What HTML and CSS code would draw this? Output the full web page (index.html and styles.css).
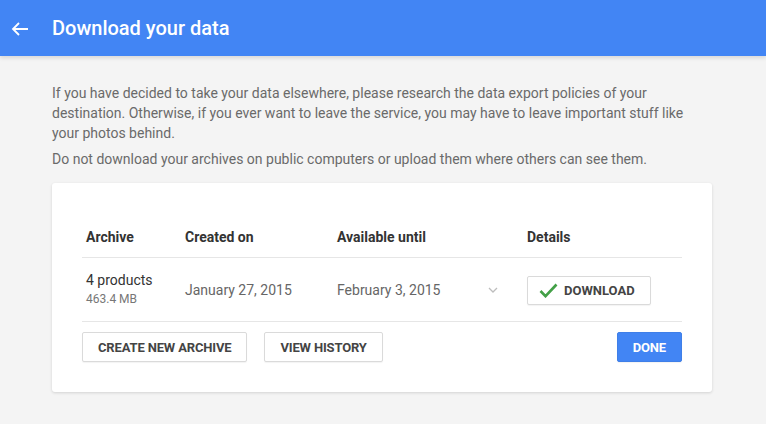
FILE: index.html
```html
<!DOCTYPE html>
<html>
<head>
<meta charset="utf-8">
<link rel="stylesheet" href="styles.css">
</head>
<body>
<header class="topbar">
  <svg class="back" width="18" height="16" viewBox="0 0 18 16"><path d="M17 8H2M8 2L2 8l6 6" fill="none" stroke="#fff" stroke-width="1.8"/></svg>
  <h1 class="title">Download your data</h1>
</header>
<main class="content">
  <p class="intro">If you have decided to take your data elsewhere, please research the data export policies of your destination. Otherwise, if you ever want to leave the service, you may have to leave important stuff like your photos behind.</p>
  <p class="intro">Do not download your archives on public computers or upload them where others can see them.</p>
  <section class="card">
    <div class="table">
      <div class="row head">
        <div class="cell">Archive</div>
        <div class="cell">Created on</div>
        <div class="cell">Available until</div>
        <div class="cell"></div>
        <div class="cell details">Details</div>
      </div>
      <div class="row data">
        <div class="cell">
          <div class="prod">4 products</div>
          <div class="size">463.4 MB</div>
        </div>
        <div class="cell date">January 27, 2015</div>
        <div class="cell date">February 3, 2015</div>
        <div class="cell chev"><svg width="10" height="6" viewBox="0 0 10 6"><path d="M1 1l4 4 4-4" fill="none" stroke="#bdbdbd" stroke-width="1.3"/></svg></div>
        <div class="cell details">
          <button class="btn dl"><svg width="19" height="15" viewBox="0 0 19 15"><path d="M1.5 8l5 5.2L17.5 1.5" fill="none" stroke="#43a047" stroke-width="2.6"/></svg>DOWNLOAD</button>
        </div>
      </div>
    </div>
    <div class="actions">
      <button class="btn">CREATE NEW ARCHIVE</button>
      <button class="btn">VIEW HISTORY</button>
      <button class="btn primary">DONE</button>
    </div>
  </section>
</main>
</body>
</html>
```
FILE: styles.css
```css
html, body {
  margin: 0;
  padding: 0;
}
body {
  background: #f4f4f4;
  font-family: Roboto, "Liberation Sans", Arial, sans-serif;
  width: 766px;
  height: 424px;
  overflow: hidden;
}
.topbar {
  height: 56px;
  background: #4285f4;
  display: flex;
  align-items: center;
  box-shadow: 0 2px 4px rgba(0,0,0,0.12);
}
.back {
  margin-left: 11px;
  margin-top: 1px;
}
.title {
  margin: 0 0 0 23px;
  color: #fff;
  font-size: 20px;
  font-weight: 500;
}
.content {
  margin-left: 52px;
  width: 660px;
  padding-top: 27px;
}
.intro {
  margin: 0 0 6px 0;
  font-size: 14px;
  line-height: 20px;
  color: #6a6a6a;
}
.card {
  margin-top: 14px;
  background: #fff;
  border-radius: 3px;
  box-shadow: 0 1px 3px rgba(0,0,0,0.14);
  padding: 34px 30px 30px 30px;
}
.row {
  display: grid;
  grid-template-columns: 99px 152px 150px 40px 1fr;
  align-items: center;
  border-bottom: 1px solid #e6e6e6;
}
.row.head {
  height: 40px;
  font-weight: 700;
  font-size: 14px;
  color: #333;
}
.row.data {
  height: 63px;
}
.cell {
  padding-left: 4px;
}
.prod {
  font-size: 14px;
  color: #333;
  line-height: 19px;
}
.size {
  font-size: 12px;
  color: #777;
  line-height: 19px;
}
.date {
  font-size: 14px;
  color: #666;
}
.chev {
  display: flex;
  align-items: center;
  padding-left: 5px;
}
.btn {
  font-family: Roboto, "Liberation Sans", Arial, sans-serif;
  font-size: 13px;
  font-weight: 700;
  letter-spacing: -0.15px;
  color: #444;
  background: #fff;
  border: 1px solid #dadada;
  border-radius: 2px;
  height: 30px;
  padding: 0 15px;
  box-shadow: 0 1px 1px rgba(0,0,0,0.05);
  display: inline-flex;
  align-items: center;
}
.dl {
  height: 29px;
  padding: 0 15px 0 11px;
  margin-top: 1px;
  letter-spacing: 0;
}
.dl svg {
  margin-right: 6px;
}
.actions {
  display: flex;
  gap: 17px;
  margin-top: 10px;
}
.btn.primary {
  margin-left: auto;
  background: #4285f4;
  border-color: #3f7fe8;
  color: #fff;
}
```
